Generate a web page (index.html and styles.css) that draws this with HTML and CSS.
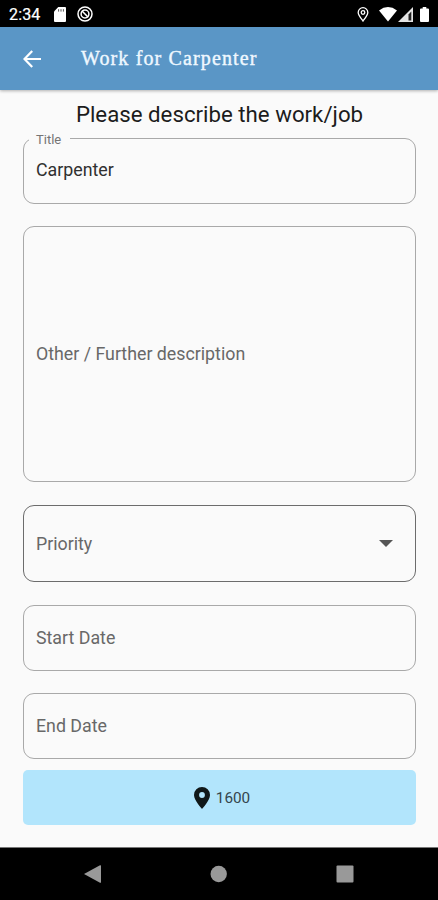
FILE: index.html
```html
<!DOCTYPE html>
<html lang="en">
<head>
<meta charset="utf-8">
<title>Work for Carpenter</title>
<link rel="stylesheet" href="styles.css">
</head>
<body>
<div class="status">
  <span class="clock">2:34</span>
  <svg class="sd" width="12" height="15" viewBox="0 0 12 15"><path fill="#fff" d="M4.300 0H11q1 0 1 1v13q0 1-1 1H1q-1 0-1-1V4.500z"/><path stroke="#555" stroke-width="1" d="M4.600 2.200v2.400M7 2.200v2.400M9.400 2.200v2.400"/></svg>
  <svg class="sync" width="16" height="16" viewBox="0 0 16 16" fill="none" stroke="#fff"><circle cx="8" cy="8" r="7" stroke-width="1.500"/><circle cx="8" cy="8" r="3.900" stroke-width="1.500"/><path stroke-width="1.600" d="M4.800 4.800l6.400 6.400"/></svg>
  <svg class="loc" width="12" height="15" viewBox="0 0 12 15" fill="none" stroke="#fff" stroke-width="1.300"><path d="M6 14C3.500 10.700 1.200 8 1.200 5.500a4.800 4.800 0 0 1 9.600 0C10.800 8 8.500 10.700 6 14z"/><circle cx="6" cy="5.500" r="1.800"/></svg>
  <svg class="wifi" width="18" height="15" viewBox="0 0 18 15"><path fill="#fff" d="M0 3.500Q9-3.300 18 3.500L9 14.500z"/></svg>
  <svg class="cell" width="15" height="15" viewBox="0 0 15 15"><path fill="#e4e4e4" d="M15 0v15H0z"/><path fill="#222" d="M13.300 4.500v9H10.500V7.500z"/></svg>
  <svg class="batt" width="9" height="15" viewBox="0 0 9 15"><path fill="#fff" d="M2.700 0h3.600v1.500H8q1 0 1 1V14q0 1-1 1H1q-1 0-1-1V2.500q0-1 1-1h1.700z"/></svg>
</div>
<header class="appbar">
  <svg class="back" width="18" height="18" viewBox="0 0 18 18" fill="none" stroke="#fff" stroke-width="2.200"><path d="M18 9H1.600M9.200 1L1.500 9l7.700 8"/></svg>
  <h1>Work for Carpenter</h1>
</header>
<main>
  <h2>Please describe the work/job</h2>
  <div class="field title"><span class="legend">Title</span><span>Carpenter</span></div>
  <div class="field desc"><span>Other / Further description</span></div>
  <div class="field priority"><span>Priority</span><svg width="14" height="7" viewBox="0 0 14 7"><path fill="#555" d="M0 0h14L7 7z"/></svg></div>
  <div class="field date"><span>Start Date</span></div>
  <div class="field date"><span>End Date</span></div>
  <div class="button"><svg width="16" height="22" viewBox="0 0 16 22"><path fill="#101819" fill-rule="evenodd" d="M8 0a8 8 0 0 0-8 8c0 5.500 8 14 8 14s8-8.500 8-14a8 8 0 0 0-8-8zm0 5.100a2.900 2.900 0 1 1 0 5.800 2.900 2.900 0 0 1 0-5.800z"/></svg><span>1600</span></div>
</main>
<nav>
  <svg width="17" height="18" viewBox="0 0 17 18"><path fill="#999" d="M0 9L16 .3q1-.5 1 .5v16.400q0 1-1 .5z"/></svg>
  <svg width="17" height="18" viewBox="0 0 17 18"><circle cx="8.700" cy="9" r="8.200" fill="#999"/></svg>
  <svg width="18" height="18" viewBox="0 0 18 18"><rect x=".5" y=".5" width="17" height="17" rx="1" fill="#999"/></svg>
</nav>
</body>
</html>
```
FILE: styles.css
```css
* { box-sizing: border-box; }
body {
  margin: 0;
  width: 438px;
  height: 900px;
  overflow: hidden;
  display: flex;
  flex-direction: column;
  background: #fafafa;
  font-family: Roboto, "Liberation Sans", sans-serif;
  white-space: nowrap;
}
svg { display: block; flex: none; }
.status {
  height: 27px;
  flex: none;
  display: flex;
  align-items: center;
  background: #000;
  color: #fff;
  padding: 1px 9px 0;
}
.clock { width: 45px; font-size: 16px; letter-spacing: .15px; -webkit-text-stroke: .2px #fff; }
.sync { margin-left: 11px; }
.loc { margin-left: auto; }
.wifi { margin-left: 10px; }
.cell { margin-left: 1px; }
.batt { margin-left: 7px; }
.appbar {
  height: 63px;
  flex: none;
  display: flex;
  align-items: center;
  padding-left: 23px;
  background: #5a96c6;
  box-shadow: 0 1px 3px rgba(0, 0, 0, .3);
}
h1 {
  margin: -2px 0 0 40px;
  color: #eff8ff;
  font: 400 20px/24px "Liberation Serif", serif;
  letter-spacing: 1.14px;
  -webkit-text-stroke: .4px #eff8ff;
}
main {
  flex: 1;
  display: flex;
  flex-direction: column;
  padding: 11px 22px 0 23px;
}
h2 {
  margin: 0;
  height: 37px;
  font-size: 22.250px;
  font-weight: 400;
  line-height: 27px;
  text-align: center;
  color: #1c1c1c;
}
.field {
  position: relative;
  flex: none;
  display: flex;
  align-items: center;
  padding: 0 22px 0 12px;
  border: 1px solid #a9a9a9;
  border-radius: 11px;
  font-size: 17.800px;
  color: #686868;
}
.title { height: 66px; margin-bottom: 22px; color: #303030; padding-bottom: 4px; }
.legend {
  position: absolute;
  left: 5px;
  top: -8px;
  width: 41px;
  padding-left: 7px;
  background: #fafafa;
  color: #757575;
  font-size: 13px;
  line-height: 17px;
}
.desc { height: 256px; margin-bottom: 23px; padding-bottom: 1px; }
.priority { height: 77px; margin-bottom: 23px; border-color: #6c6c6c; justify-content: space-between; }
.date { height: 66px; margin-bottom: 22px; padding-bottom: 2px; }
.date + .date { margin-bottom: 11px; }
.button {
  height: 55px;
  flex: none;
  display: flex;
  align-items: center;
  justify-content: center;
  gap: 6px;
  padding-left: 5px;
  border-radius: 5px;
  background: #b2e5fc;
  color: #35454d;
  font-size: 15.300px;
}
nav {
  height: 53px;
  flex: none;
  display: flex;
  justify-content: space-between;
  padding: 17px 84px 0;
  background: #000;
  border-top: 1px solid #777;
}
```
